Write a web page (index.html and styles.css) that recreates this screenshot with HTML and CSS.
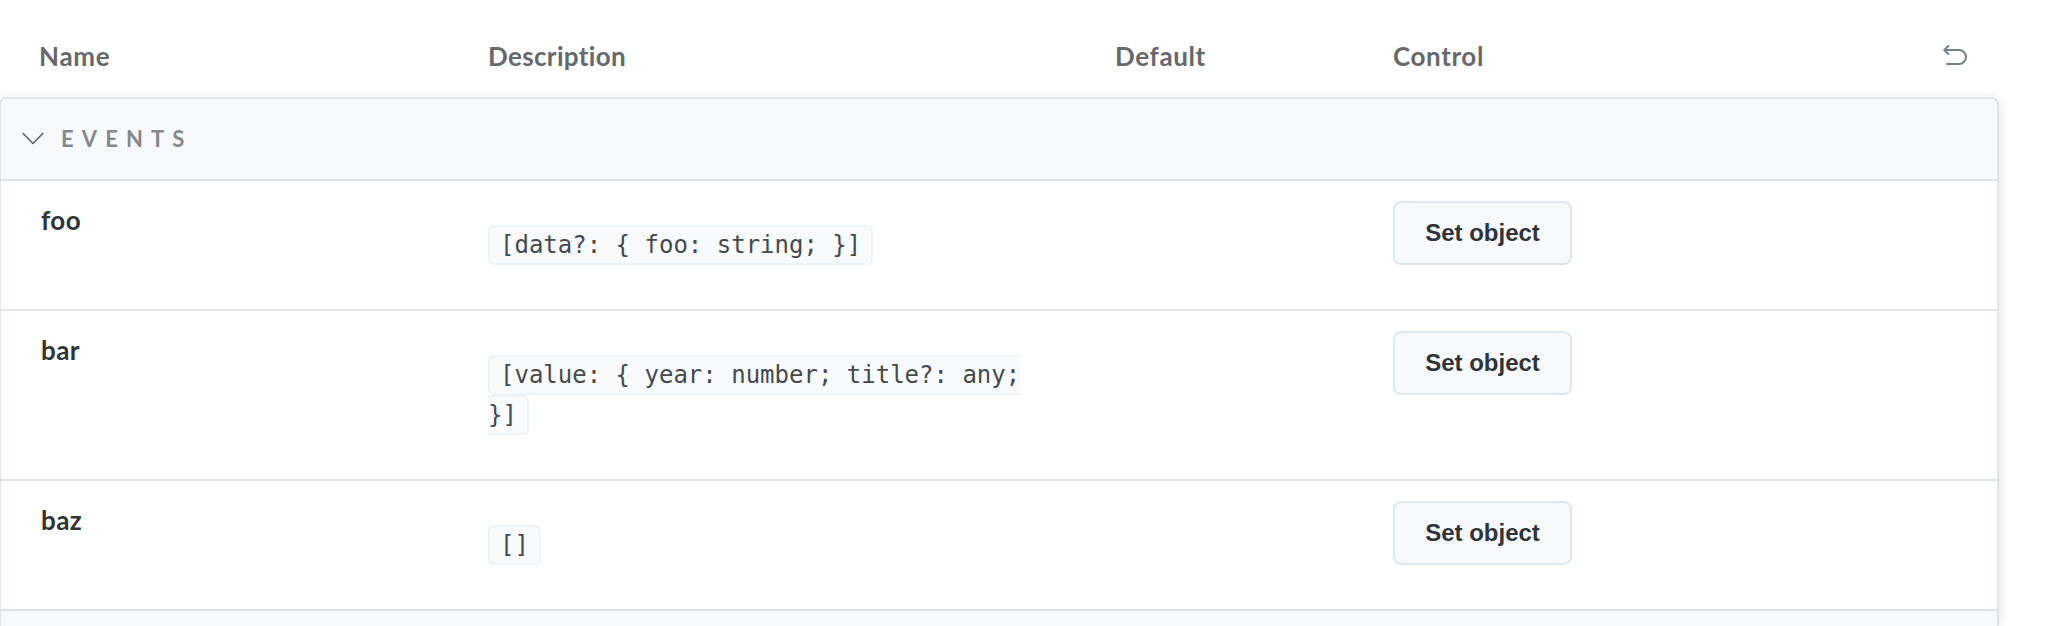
FILE: index.html
```html
<!DOCTYPE html>
<html lang="en">
<head>
<meta charset="utf-8">
<title>Controls</title>
<link rel="stylesheet" href="styles.css">
</head>
<body>
<main class="args">
  <div class="grid head">
    <span class="h-name">Name</span><span class="h-desc">Description</span><span class="h-default">Default</span><span class="h-control">Control</span>
    <svg class="undo" viewBox="0 0 24 20" fill="none" stroke="#73828c" stroke-width="2" stroke-linecap="round" stroke-linejoin="round"><path d="M5.4 1 1.2 5l4.2 4M1.5 5H16a7 7 0 0 1 0 14H4"/></svg>
  </div>
  <div class="panel">
    <div class="section">
      <svg class="chevron" viewBox="0 0 22 13" fill="none" stroke="#5c6166" stroke-width="1.6" stroke-linecap="round" stroke-linejoin="round"><path d="m1.2 1.5 9.8 10 9.8-10"/></svg>
      <span class="events">EVENTS</span>
    </div>
    <div class="grid row">
      <span class="name">foo</span>
      <div class="desc"><code>[data?: { foo: string; }]</code></div>
      <span></span>
      <div><button class="set">Set object</button></div>
    </div>
    <div class="grid row row-tall">
      <span class="name">bar</span>
      <div class="desc"><code>[value: { year: number; title?: any; }]</code></div>
      <span></span>
      <div><button class="set">Set object</button></div>
    </div>
    <div class="grid row row-last">
      <span class="name">baz</span>
      <div class="desc"><code>[]</code></div>
      <span></span>
      <div><button class="set">Set object</button></div>
    </div>
    <div class="section section-next"></div>
  </div>
</main>
</body>
</html>
```
FILE: styles.css
```css
* { box-sizing: border-box; }
body {
  margin: 0;
  height: 626px;
  overflow: hidden;
  background: #fff;
  color: #2e3438;
  font-family: Lato, "Open Sans", sans-serif;
}
.args { width: 1999px; }
.grid {
  display: grid;
  grid-template-columns: 448px 627px 278px 1fr;
}
.head {
  grid-template-columns: 449px 627px 278px 1fr 24px;
  height: 97px;
  padding: 40px 32px 0 39px;
  color: #66696c;
  font-size: 26px;
  font-weight: 700;
  line-height: 32px;
}
.h-name { letter-spacing: 0.7px; }
.h-desc { letter-spacing: 0.35px; }
.h-default { letter-spacing: 0.6px; }
.h-control { letter-spacing: 0.6px; }
.undo { width: 24px; height: 20px; margin-top: 5px; }
.panel {
  margin-left: -1px;
  border: 2px solid #dfe5eb;
  border-bottom: 0;
  border-radius: 8px 8px 0 0;
  background: #fff;
  box-shadow: 0 2px 12px rgba(0, 0, 0, 0.12);
}
.section {
  display: flex;
  align-items: center;
  height: 82px;
  padding-left: 21px;
  border-bottom: 2px solid #dfe4ea;
  border-radius: 6px 6px 0 0;
  background: #f7f9fd;
}
.section-next {
  height: 15px;
  border-bottom: 0;
  border-radius: 0;
}
.chevron { width: 22px; height: 13px; margin-top: -1px; }
.events {
  margin-left: 17px;
  color: #85888c;
  font-size: 22px;
  font-weight: 700;
  letter-spacing: 8.1px;
  line-height: 30px;
}
.row {
  height: 130px;
  padding: 20px 0 0 39px;
  border-bottom: 2px solid #dfe4ea;
}
.row-tall { height: 170px; }
.row-last { border-bottom-color: #d8e0e9; }
.name {
  padding: 3px 0 0 1px;
  font-size: 26px;
  font-weight: 700;
  letter-spacing: 0.4px;
  line-height: 32px;
}
.desc {
  width: 550px;
  padding-top: 24px;
  font: 24px/40px "DejaVu Sans Mono", monospace;
}
code {
  padding: 4px 10px;
  border: 2px solid #ecf4f9;
  border-radius: 6px;
  background: #f8fafc;
  color: #444a4d;
  font: inherit;
}
.set {
  display: block;
  width: 179px;
  height: 64px;
  padding: 0;
  border: 2px solid #dce7f2;
  border-radius: 8px;
  background: #f7f9fd;
  color: #2e3438;
  font: 700 24px/28px "Liberation Sans", Arial, sans-serif;
}
```
